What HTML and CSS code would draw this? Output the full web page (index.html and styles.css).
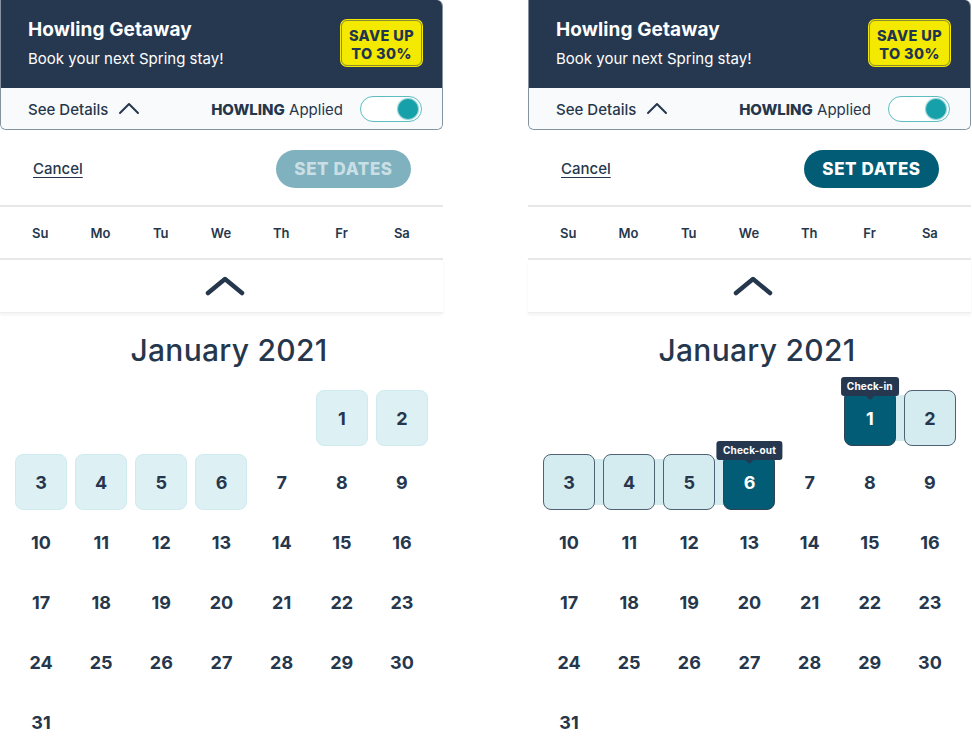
FILE: index.html
```html
<!DOCTYPE html>
<html lang="en">
<head>
<meta charset="utf-8">
<title>Howling Getaway – Date picker</title>
<link rel="stylesheet" href="styles.css">
</head>
<body>
<div class="page">

  <!-- LEFT PANEL: no dates selected -->
  <section class="panel">
    <div class="promo">
      <div class="promo-top">
        <div class="promo-text">
          <h1 class="promo-title">Howling Getaway</h1>
          <p class="promo-sub">Book your next Spring stay!</p>
        </div>
        <div class="badge">SAVE UP<br>TO 30%</div>
      </div>
      <div class="promo-strip">
        <span class="details">See Details
          <svg class="chev-small" width="22" height="14" viewBox="0 0 22 14"><path d="M2 12 L11 3 L20 12" fill="none" stroke="#26374d" stroke-width="2" stroke-linecap="round" stroke-linejoin="round"/></svg>
        </span>
        <span class="applied"><b>HOWLING</b> Applied</span>
        <span class="toggle"><span class="knob"></span></span>
      </div>
    </div>

    <div class="actions">
      <a class="cancel" href="#">Cancel</a>
      <button class="set-dates disabled">SET DATES</button>
    </div>

    <div class="weekdays">
      <span>Su</span><span>Mo</span><span>Tu</span><span>We</span><span>Th</span><span>Fr</span><span>Sa</span>
    </div>

    <div class="collapse-row">
      <svg width="40" height="20" viewBox="0 0 40 20"><path d="M3 17 L20 3 L37 17" fill="none" stroke="#26374d" stroke-width="4.5" stroke-linecap="round" stroke-linejoin="round"/></svg>
    </div>

    <h2 class="month">January 2021</h2>

    <div class="grid">
      <span class="day empty"></span><span class="day empty"></span><span class="day empty"></span><span class="day empty"></span><span class="day empty"></span>
      <span class="day avail">1</span><span class="day avail">2</span>
      <span class="day avail">3</span><span class="day avail">4</span><span class="day avail">5</span><span class="day avail">6</span><span class="day">7</span><span class="day">8</span><span class="day">9</span>
      <span class="day">10</span><span class="day">11</span><span class="day">12</span><span class="day">13</span><span class="day">14</span><span class="day">15</span><span class="day">16</span>
      <span class="day">17</span><span class="day">18</span><span class="day">19</span><span class="day">20</span><span class="day">21</span><span class="day">22</span><span class="day">23</span>
      <span class="day">24</span><span class="day">25</span><span class="day">26</span><span class="day">27</span><span class="day">28</span><span class="day">29</span><span class="day">30</span>
      <span class="day">31</span>
    </div>
  </section>

  <!-- RIGHT PANEL: range selected -->
  <section class="panel">
    <div class="promo">
      <div class="promo-top">
        <div class="promo-text">
          <h1 class="promo-title">Howling Getaway</h1>
          <p class="promo-sub">Book your next Spring stay!</p>
        </div>
        <div class="badge">SAVE UP<br>TO 30%</div>
      </div>
      <div class="promo-strip">
        <span class="details">See Details
          <svg class="chev-small" width="22" height="14" viewBox="0 0 22 14"><path d="M2 12 L11 3 L20 12" fill="none" stroke="#26374d" stroke-width="2" stroke-linecap="round" stroke-linejoin="round"/></svg>
        </span>
        <span class="applied"><b>HOWLING</b> Applied</span>
        <span class="toggle"><span class="knob"></span></span>
      </div>
    </div>

    <div class="actions">
      <a class="cancel" href="#">Cancel</a>
      <button class="set-dates">SET DATES</button>
    </div>

    <div class="weekdays">
      <span>Su</span><span>Mo</span><span>Tu</span><span>We</span><span>Th</span><span>Fr</span><span>Sa</span>
    </div>

    <div class="collapse-row">
      <svg width="40" height="20" viewBox="0 0 40 20"><path d="M3 17 L20 3 L37 17" fill="none" stroke="#26374d" stroke-width="4.5" stroke-linecap="round" stroke-linejoin="round"/></svg>
    </div>

    <h2 class="month">January 2021</h2>

    <div class="grid">
      <span class="day empty"></span><span class="day empty"></span><span class="day empty"></span><span class="day empty"></span><span class="day empty"></span>
      <span class="day selected band-right">1<span class="tip">Check-in</span></span><span class="day range band-left">2</span>
      <span class="day range band-right">3</span><span class="day range band-both">4</span><span class="day range band-both">5</span><span class="day selected band-left">6<span class="tip">Check-out</span></span><span class="day">7</span><span class="day">8</span><span class="day">9</span>
      <span class="day">10</span><span class="day">11</span><span class="day">12</span><span class="day">13</span><span class="day">14</span><span class="day">15</span><span class="day">16</span>
      <span class="day">17</span><span class="day">18</span><span class="day">19</span><span class="day">20</span><span class="day">21</span><span class="day">22</span><span class="day">23</span>
      <span class="day">24</span><span class="day">25</span><span class="day">26</span><span class="day">27</span><span class="day">28</span><span class="day">29</span><span class="day">30</span>
      <span class="day">31</span>
    </div>
  </section>

</div>
</body>
</html>
```

FILE: styles.css
```css
* { box-sizing: border-box; }

html, body {
  margin: 0;
  padding: 0;
  background: #ffffff;
}

body {
  font-family: Inter, "Noto Sans", "DejaVu Sans", sans-serif;
  color: #26374d;
}

.page {
  display: flex;
  gap: 85px;
  width: 972px;
  height: 753px;
  overflow: hidden;
}

.panel {
  width: 443px;
  flex: none;
}

/* ---------- promo card ---------- */
.promo {
  border: 1px solid #8592a0;
  border-top: none;
  border-radius: 0 6px 6px 6px;
  overflow: hidden;
}

.promo-top {
  background: #263850;
  height: 88px;
  display: flex;
  justify-content: space-between;
  align-items: flex-start;
  padding: 19px 20px 0 27px;
}

.promo-title {
  margin: 0;
  font-size: 19px;
  line-height: 22px;
  font-weight: 700;
  color: #ffffff;
  letter-spacing: 0.1px;
}

.promo-sub {
  margin: 8px 0 0;
  font-size: 15px;
  line-height: 20px;
  font-weight: 400;
  color: #ffffff;
}

.badge {
  margin-top: 1px;
  width: 81px;
  height: 46px;
  background: #f4e900;
  border: 1.5px solid #8d8a2c;
  box-shadow: 0 0 0 1px #f4e900;
  border-radius: 6px;
  color: #1f3550;
  font-size: 14.5px;
  line-height: 18px;
  font-weight: 800;
  text-align: center;
  display: flex;
  align-items: center;
  justify-content: center;
  padding-top: 3px;
  letter-spacing: 0.4px;
}

.promo-strip {
  background: #f9fafb;
  height: 41px;
  display: flex;
  align-items: center;
  padding: 1px 20px 0 27px;
  font-size: 15px;
}

.details {
  display: flex;
  align-items: center;
  gap: 10px;
  font-weight: 500;
}

.chev-small { display: block; margin-top: -2px; }

.applied {
  margin-left: auto;
  margin-right: 17px;
  font-weight: 400;
  font-size: 15px;
}

.applied b { font-weight: 800; }

.toggle {
  width: 62px;
  height: 26px;
  border: 1.5px solid #5fbcc3;
  border-radius: 13px;
  background: #ffffff;
  display: flex;
  align-items: center;
  justify-content: flex-end;
  padding-right: 3px;
}

.knob {
  width: 20px;
  height: 20px;
  border-radius: 50%;
  background: #16a0a9;
  box-shadow: 0 0 1px 1px rgba(22, 160, 169, 0.5);
}

/* ---------- actions ---------- */
.actions {
  height: 77px;
  display: flex;
  align-items: center;
  justify-content: space-between;
  padding: 2px 32px 0 33px;
  border-bottom: 2px solid #e6e7e8;
}

.cancel {
  color: #26374d;
  font-size: 15px;
  font-weight: 500;
  text-decoration: underline;
  text-underline-offset: 3px;
  text-decoration-thickness: 1px;
}

.set-dates {
  width: 135px;
  height: 38px;
  border: none;
  border-radius: 19px;
  background: #035c75;
  color: #ffffff;
  font-family: inherit;
  font-size: 17px;
  font-weight: 800;
  letter-spacing: 0.6px;
  padding: 0;
}

.set-dates.disabled {
  background: #80b1be;
  color: #c9dfe5;
}

/* ---------- weekdays ---------- */
.weekdays {
  height: 53px;
  display: grid;
  grid-template-columns: repeat(7, 1fr);
  align-items: center;
  padding: 0 11px 0 10px;
  border-bottom: 2px solid #e6e7e8;
  font-size: 13px;
  font-weight: 600;
  text-align: center;
}

.collapse-row {
  height: 53px;
  display: flex;
  align-items: center;
  justify-content: center;
  border-bottom: 1px solid #eeeeee;
  box-shadow: 0 2px 3px rgba(0, 0, 0, 0.05);
}

.collapse-row svg { display: block; margin-left: 6px; margin-top: -1px; }

.month {
  margin: 19px 0 0;
  padding-left: 15px;
  height: 36px;
  line-height: 36px;
  text-align: center;
  font-size: 30px;
  font-weight: 500;
  letter-spacing: 0.3px;
}

/* ---------- grid ---------- */
.grid {
  position: relative;
  z-index: 0;
  margin: 22px 11px 0 11px;
  display: grid;
  grid-template-columns: repeat(7, 1fr);
  grid-template-rows: 64px repeat(5, 60px);
}

.day {
  position: relative;
  justify-self: center;
  align-self: start;
  width: 52px;
  height: 56px;
  display: flex;
  align-items: center;
  justify-content: center;
  font-size: 18px;
  font-weight: 700;
  border-radius: 8px;
}

.day.avail {
  background: #ddf1f4;
  border: 1px solid #cfebef;
}

.day.range {
  background: #d4ecf0;
  border: 1.5px solid #4f6172;
}

.day.selected {
  background: #035c75;
  border: 1.5px solid #2f4356;
  color: #ffffff;
}

.day.band-left::before,
.day.band-right::before,
.day.band-both::before {
  content: "";
  position: absolute;
  top: 4px;
  bottom: 4px;
  background: #d4ecf0;
  z-index: -1;
}

.day.band-left::before { left: -6px; right: 50%; }
.day.band-right::before { left: 50%; right: -6px; }
.day.band-both::before { left: -6px; right: -6px; }

.tip {
  position: absolute;
  left: 50%;
  top: -14px;
  transform: translateX(-50%);
  background: #263850;
  color: #ffffff;
  font-size: 10px;
  font-weight: 700;
  line-height: 19px;
  height: 19px;
  padding: 0 6px;
  border-radius: 3px;
  white-space: nowrap;
  letter-spacing: 0.2px;
}

.tip::after {
  content: "";
  position: absolute;
  left: 50%;
  bottom: -4px;
  margin-left: -4px;
  border-left: 4px solid transparent;
  border-right: 4px solid transparent;
  border-top: 4px solid #263850;
}
```
